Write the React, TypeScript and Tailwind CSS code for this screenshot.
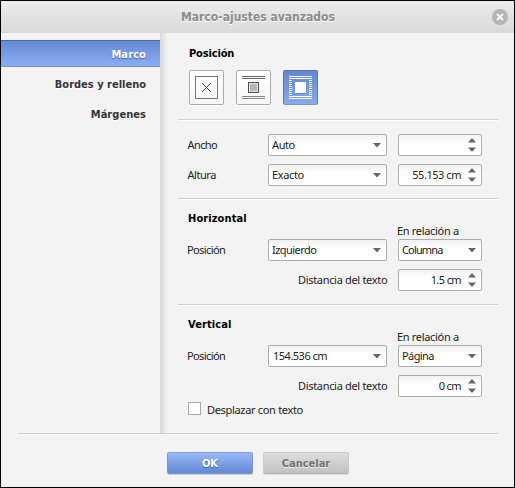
import React from "react";

function Divider({ className = "" }: { className?: string }) {
  return <div className={`h-[2px] border-t border-[#cfcfcf] bg-white ${className}`} />;
}

const field =
  "flex h-[22px] shrink-0 items-center rounded-[2px] border border-[#adadad] bg-gradient-to-b from-[#f1f1f1] to-white to-40% text-[#222]";

function Select({ value, className, textClass }: { value: string; className: string; textClass: string }) {
  return (
    <div className={`${field} ${className} justify-between pl-[3px] pr-[5px]`}>
      <span className={`whitespace-nowrap ${textClass}`}>{value}</span>
      <svg width="8" height="4" viewBox="0 0 8 4" className="shrink-0">
        <path d="M0 0h8L4.5 4h-1z" fill="#666" />
      </svg>
    </div>
  );
}

function Spinner({ value, textClass = "" }: { value: string; textClass?: string }) {
  return (
    <div className={`${field} w-[84px] justify-end pr-[5px]`}>
      <span className={`mr-[7px] whitespace-nowrap ${textClass}`}>{value}</span>
      <svg width="8" height="14" viewBox="0 0 8 14" className="shrink-0">
        <path d="M0 4.5h8L4.5.5h-1zM0 9.5h8L4.5 13.5h-1z" fill="#666" />
      </svg>
    </div>
  );
}

function Row({ label, labelClass, children }: { label: string; labelClass: string; children: React.ReactNode }) {
  return (
    <div className="flex h-[22px] items-center">
      <span className={`w-[81px] shrink-0 whitespace-nowrap ${labelClass}`}>{label}</span>
      {children}
    </div>
  );
}

function Distance({ value, textClass }: { value: string; textClass: string }) {
  return (
    <div className="mt-2 flex h-[22px] items-center">
      <span className="ml-[111px] w-[100px] shrink-0 whitespace-nowrap tracking-[-0.32px]">Distancia del texto</span>
      <Spinner value={value} textClass={textClass} />
    </div>
  );
}

const bold = "font-['DejaVu_Sans_Condensed','DejaVu_Sans',sans-serif] font-bold [font-stretch:condensed]";

const iconButton = "flex size-[35px] items-center justify-center rounded-[2px] border shadow-[0_1px_0_#fff]";

export default function App() {
  return (
    <div className="flex h-[488px] w-[515px] flex-col border border-black bg-[#f3f3f3] font-['Noto_Sans',sans-serif] text-[11px] leading-[14px] text-[#222]">
      <header className="flex h-8 shrink-0 items-center bg-gradient-to-b from-[#ececec] to-[#d9d9d9] pr-[6px]">
        <h1 className={`ml-[180px] flex-1 whitespace-nowrap text-[12px] text-[#8b8b8b] [text-shadow:0_1px_0_#fff] ${bold}`}>
          Marco-ajustes avanzados
        </h1>
        <button className="size-4">
          <svg width="16" height="16" viewBox="0 0 16 16">
            <circle cx="8" cy="8" r="8" fill="#b5b5b5" />
            <path d="M5 5l6 6M11 5l-6 6" stroke="#fff" strokeWidth="2" />
          </svg>
        </button>
      </header>

      <div className="flex h-[400px] shrink-0">
        <nav className={`flex w-[159px] flex-col pt-[7px] text-right text-[#333] ${bold}`}>
          <div className="h-[27px] border-y border-t-[#4a689f] border-b-[#6c8fd5] bg-gradient-to-b from-[#6489d5] to-[#8caef3] pr-[14px] pt-[7px] tracking-[0.1px] text-white [text-shadow:0_1px_1px_#45629e]">
            Marco
          </div>
          <div className="mt-[11px] pr-[14px] [text-shadow:0_1px_0_#fff]">Bordes y relleno</div>
          <div className="mt-4 pr-[14px] tracking-[0.05px] [text-shadow:0_1px_0_#fff]">Márgenes</div>
        </nav>

        <main className="flex-1 bg-gradient-to-r from-[#d8d8d8] to-[#f3f3f3] to-[8px] pl-[18px] pr-4">
          <section className="pl-[11px]">
            <h2 className={`h-[37px] pt-[14px] tracking-[-0.15px] text-black ${bold}`}>Posición</h2>
            <div className="flex gap-3">
              <button className={`${iconButton} border-[#acacac] bg-gradient-to-b from-white to-[#f6f6f6]`}>
                <svg width="23" height="23" viewBox="0 0 23 23" shapeRendering="crispEdges">
                  <path d="M.5.5h22v22H.5z" fill="none" stroke="#777" />
                  <path
                    d="M7 7h1v1H7zM8 8h1v1H8zM9 9h1v1H9zM10 10h1v1h-1zM11 11h1v1h-1zM12 12h1v1h-1zM13 13h1v1h-1zM14 14h1v1h-1zM15 15h1v1h-1zM15 7h1v1h-1zM14 8h1v1h-1zM13 9h1v1h-1zM12 10h1v1h-1zM10 12h1v1h-1zM9 13h1v1H9zM8 14h1v1H8zM7 15h1v1H7z"
                    fill="#444"
                  />
                </svg>
              </button>
              <button className={`${iconButton} border-[#acacac] bg-gradient-to-b from-white to-[#f6f6f6]`}>
                <svg width="23" height="23" viewBox="0 0 23 23" shapeRendering="crispEdges">
                  <path d="M0 .5h23M0 2.5h23" stroke="#666" />
                  <path d="M0 20.5h23M0 22.5h23" stroke="#858585" />
                  <path d="M6.5 6.5h10v10h-10z" fill="#e4e4e4" stroke="#4c4c4c" />
                  <path d="M8 8h7v7H8z" fill="#b5b5b5" />
                </svg>
              </button>
              <button className={`${iconButton} border-[#5777b9] border-b-[#7598e1] bg-gradient-to-b from-[#6286d1] to-[#87aaf0]`}>
                <svg width="23" height="23" viewBox="0 0 23 23" shapeRendering="crispEdges">
                  <path d="M0 .5h23M0 2.5h23M0 20.5h23M0 22.5h23" stroke="#fff" />
                  <path
                    d="M0 4.5h3M0 6.5h3M0 8.5h3M0 10.5h3M0 12.5h3M0 14.5h3M0 16.5h3M0 18.5h3M20 4.5h3M20 6.5h3M20 8.5h3M20 10.5h3M20 12.5h3M20 14.5h3M20 16.5h3M20 18.5h3"
                    stroke="#fff"
                  />
                  <path d="M6 6h11v12H6z" fill="#5777b9" opacity=".5" />
                  <path d="M6 6h11v11H6z" fill="#fff" />
                </svg>
              </button>
            </div>
          </section>

          <Divider className="mt-[14px]" />
          <section className="flex flex-col gap-2 pl-[9px] pt-[13px]">
            <Row label="Ancho" labelClass="pl-[0.5px] tracking-[-0.6px]">
              <Select value="Auto" className="mr-[11px] w-[119px]" textClass="tracking-[-0.4px]" />
              <Spinner value="" />
            </Row>
            <Row label="Altura" labelClass="pl-[0.5px] tracking-[-0.45px]">
              <Select value="Exacto" className="mr-[11px] w-[119px]" textClass="tracking-[-0.35px]" />
              <Spinner value="55.153 cm" textClass="tracking-[-0.45px]" />
            </Row>
          </section>

          <Divider className="mt-3" />
          <section className="pl-[9px]">
            <h2 className={`h-6 pl-px pt-3 tracking-[0.1px] text-black ${bold}`}>Horizontal</h2>
            <div className="ml-[210px] h-[15px] whitespace-nowrap tracking-[-0.32px]">En relación a</div>
            <Row label="Posición" labelClass="tracking-[-0.6px]">
              <Select value="Izquierdo" className="mr-[11px] w-[119px]" textClass="tracking-[-0.55px]" />
              <Select value="Columna" className="w-[84px]" textClass="tracking-[-0.85px]" />
            </Row>
            <Distance value="1.5 cm" textClass="tracking-[-0.6px]" />
          </section>

          <Divider className="mt-[13px]" />
          <section className="pl-[9px]">
            <h2 className={`h-6 pl-px pt-3 tracking-[0.1px] text-black ${bold}`}>Vertical</h2>
            <div className="ml-[210px] h-[15px] whitespace-nowrap tracking-[-0.32px]">En relación a</div>
            <Row label="Posición" labelClass="tracking-[-0.6px]">
              <Select value="154.536 cm" className="mr-[11px] w-[119px]" textClass="pl-px tracking-[-0.5px]" />
              <Select value="Página" className="w-[84px]" textClass="tracking-[-0.6px]" />
            </Row>
            <Distance value="0 cm" textClass="tracking-[-0.6px]" />
            <label className="mt-[5px] flex h-[13px] items-center pl-px">
              <span className="mr-[6px] size-[13px] border border-[#a8a8a8] bg-white" />
              <span className="whitespace-nowrap pt-[3px] tracking-[-0.32px]">Desplazar con texto</span>
            </label>
          </section>
        </main>
      </div>

      <Divider className="ml-[17px] mr-4 shrink-0" />
      <footer className={`flex gap-[10px] pl-[166px] pt-[17px] ${bold}`}>
        <button className="h-[22px] w-[86px] rounded-[2px] border border-[#7897d8] border-t-[#86a5e6] bg-gradient-to-b from-[#9ab8f6] to-[#6489d3] pt-px text-white shadow-[0_1px_0_#ccc] [text-shadow:0_1px_1px_#45629e]">
          OK
        </button>
        <button className="h-[22px] w-[86px] rounded-[2px] border border-[#cacaca] border-b-[#b5b5b5] bg-gradient-to-b from-[#dedede] to-[#c1c1c1] pt-px text-[#737373] shadow-[0_1px_0_#ddd] [text-shadow:0_1px_0_#eee]">
          Cancelar
        </button>
      </footer>
    </div>
  );
}
